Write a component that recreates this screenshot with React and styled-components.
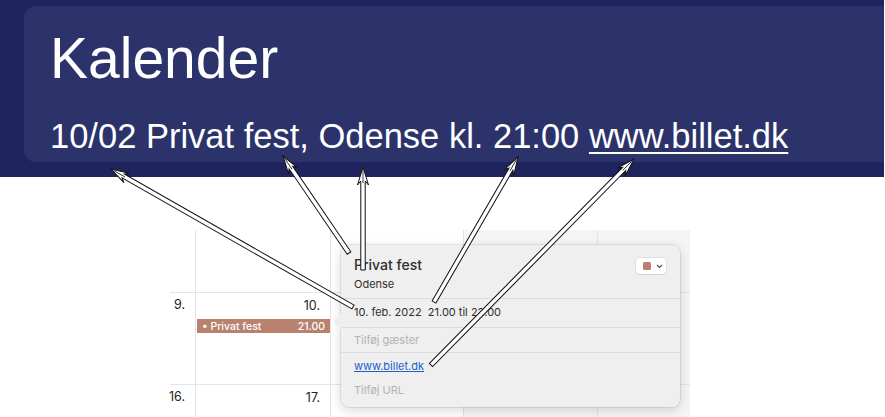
import styled, { createGlobalStyle } from "styled-components";

const GlobalStyle = createGlobalStyle`
  html, body {
    margin: 0;
    padding: 0;
    background: #ffffff;
  }
  body {
    width: 885px;
    height: 417px;
    overflow: hidden;
    font-family: "Liberation Sans", Arial, sans-serif;
  }
`;

const Page = styled.div`
  position: relative;
  width: 885px;
  height: 417px;
`;

const Header = styled.header`
  width: 884px;
  box-sizing: border-box;
  padding: 6px 0 15px 24px;
  background: #1f245e;
`;

const HeaderBox = styled.div`
  box-sizing: border-box;
  height: 156px;
  padding: 19px 0 6px 26px;
  background: #2c336b;
  border-radius: 12px 0 0 12px;
  color: #ffffff;
`;

const Title = styled.h1`
  margin: 0 0 25px;
  font-size: 57px;
  line-height: 66px;
  font-weight: 400;
`;

const Summary = styled.p`
  margin: 0;
  font-size: 34.5px;
  line-height: 40px;
  white-space: nowrap;

  a {
    color: #ffffff;
    text-decoration: underline;
    text-decoration-thickness: 2px;
    text-underline-offset: 4px;
  }
`;

const Stage = styled.section`
  padding: 53px 0 0 160px;
`;

const Calendar = styled.div`
  position: relative;
  width: 530px;
  height: 187px;
  overflow: hidden;
  font-family: Inter, "Liberation Sans", sans-serif;
`;

const Grid = styled.div`
  display: grid;
  grid-template-columns: 36px 135px 133px 134px 92px;
  grid-template-rows: 62px 92px 92px;
`;

const Cell = styled.div`
  position: relative;
  box-sizing: border-box;
  padding: 5px 10px 0 0;
  background: ${(p) => (p.$weekend ? "#f5f5f5" : "#ffffff")};
  border-right: ${(p) => (p.$last ? "none" : "1px solid #e4e4e4")};
  border-top: ${(p) => (p.$top && !p.$first ? "1px solid #e4e4e4" : "none")};

  &::before {
    content: "";
    display: ${(p) => (p.$top && p.$first ? "block" : "none")};
    position: absolute;
    top: 0;
    left: 10px;
    right: 0;
    height: 1px;
    background: #e4e4e4;
  }
`;

const DayNumber = styled.div`
  text-align: right;
  font-size: 12.5px;
  line-height: 15px;
  color: #222222;
`;

const EventBar = styled.div`
  display: flex;
  justify-content: space-between;
  align-items: center;
  margin: 6px -10px 0 1px;
  height: 14px;
  padding: 0 5px;
  background: #b8826f;
  color: #ffffff;
  font-size: 10.5px;
  font-weight: 500;
`;

const Popover = styled.div`
  position: absolute;
  left: 181px;
  top: 15px;
  width: 339px;
  height: 162px;
  box-sizing: border-box;
  background: #efefef;
  border-radius: 8px;
  box-shadow: 0 0 0 1px rgba(0, 0, 0, 0.07), 0 3px 12px rgba(0, 0, 0, 0.16);

  &::before {
    content: "";
    position: absolute;
    left: -8px;
    top: 69px;
    border-style: solid;
    border-width: 8px 8px 8px 0;
    border-color: transparent #efefef transparent transparent;
  }
`;

const Section = styled.div`
  padding: ${(p) => p.$pad};
  border-bottom: ${(p) => (p.$last ? "none" : "1px solid #dcdcdc")};
`;

const TitleRow = styled.div`
  display: flex;
  justify-content: space-between;
  align-items: flex-start;
  padding-right: 14px;
`;

const EventTitle = styled.div`
  font-size: 14px;
  line-height: 17px;
  font-weight: 500;
  color: #2e2e2e;
`;

const Line = styled.div`
  font-size: ${(p) => p.$size || "11px"};
  line-height: ${(p) => p.$lh || "14px"};
  color: ${(p) => (p.$muted ? "#b3b3b3" : "#2e2e2e")};
  margin-top: ${(p) => p.$mt || "0"};
  white-space: pre;

  a {
    color: #2060c8;
    text-decoration: underline;
  }
`;

const ColorChip = styled.div`
  display: flex;
  align-items: center;
  gap: 5px;
  margin-top: 2px;
  width: 30px;
  height: 16px;
  box-sizing: border-box;
  padding-left: 7px;
  background: #ffffff;
  border-radius: 4px;
  box-shadow: 0 0 0 0.5px rgba(0, 0, 0, 0.12), 0 1px 1px rgba(0, 0, 0, 0.06);
`;

const Swatch = styled.span`
  width: 8px;
  height: 8px;
  border-radius: 1.5px;
  background: #b8826f;
`;

const Overlay = styled.svg`
  position: absolute;
  left: 0;
  top: 0;
  pointer-events: none;
`;

const arrows = [
  { x1: 353, y1: 307, x2: 111, y2: 169 },
  { x1: 349, y1: 253, x2: 283, y2: 156 },
  { x1: 363, y1: 270, x2: 363, y2: 167 },
  { x1: 434, y1: 302, x2: 518, y2: 157 },
  { x1: 431, y1: 365, x2: 634, y2: 159 },
];

const Arrow = ({ x1, y1, x2, y2 }) => {
  const L = Math.hypot(x2 - x1, y2 - y1);
  const angle = (Math.atan2(y2 - y1, x2 - x1) * 180) / Math.PI;
  const w = 2.2;
  const h = 18;
  const hw = 5.5;
  const points = `${-L},${-w} ${-h + 4},${-w} ${-h},${-hw} 0,0 ${-h},${hw} ${-h + 4},${w} ${-L},${w}`;
  return (
    <g transform={`translate(${x2} ${y2}) rotate(${angle})`}>
      <polygon points={points} fill="#ffffff" stroke="#111111" strokeWidth="1" strokeLinejoin="miter" />
      <line x1={-h + 2} y1="0" x2="-3" y2="0" stroke="#111111" strokeWidth="0.8" />
    </g>
  );
};

const weeks = [
  ["2.", "3.", "4.", "5.", "6."],
  ["9.", "10.", "11.", "12.", "13."],
  ["16.", "17.", "18.", "19.", "20."],
];

const App = () => {
  return (
    <Page>
      <GlobalStyle />
      <Header>
        <HeaderBox>
          <Title>Kalender</Title>
          <Summary>
            10/02 Privat fest, Odense kl. 21:00 <a href="#">www.billet.dk</a>
          </Summary>
        </HeaderBox>
      </Header>
      <Stage>
        <Calendar>
          <Grid>
            {weeks.map((week, r) =>
              week.map((day, c) => (
                <Cell
                  key={day}
                  $first={c === 0}
                  $last={c === 4}
                  $top={r > 0}
                  $weekend={c >= 3}
                >
                  {r > 0 && c < 2 && <DayNumber>{day}</DayNumber>}
                  {r === 1 && c === 1 && (
                    <EventBar>
                      <span>• Privat fest</span>
                      <span>21.00</span>
                    </EventBar>
                  )}
                </Cell>
              ))
            )}
          </Grid>
          <Popover>
            <Section $pad="11px 0 7px 13px">
              <TitleRow>
                <EventTitle>Privat fest</EventTitle>
                <ColorChip>
                  <Swatch />
                  <svg width="7" height="5" viewBox="0 0 7 5">
                    <path d="M1 1 L3.5 3.5 L6 1" fill="none" stroke="#555" strokeWidth="1.2" />
                  </svg>
                </ColorChip>
              </TitleRow>
              <Line $mt="3px">Odense</Line>
            </Section>
            <Section $pad="6px 0 7px 13px">
              <Line $size="11px" $lh="15px">10. feb. 2022  21.00 til 22.00</Line>
            </Section>
            <Section $pad="5px 0 5px 13px">
              <Line $muted>Tilføj gæster</Line>
            </Section>
            <Section $pad="6px 0 11px 13px" $last>
              <Line>
                <a href="#">www.billet.dk</a>
              </Line>
              <Line $muted $mt="10px">Tilføj URL</Line>
            </Section>
          </Popover>
        </Calendar>
      </Stage>
      <Overlay width="885" height="417" viewBox="0 0 885 417">
        {arrows.map((a, i) => (
          <Arrow key={i} {...a} />
        ))}
      </Overlay>
    </Page>
  );
};

export default App;
